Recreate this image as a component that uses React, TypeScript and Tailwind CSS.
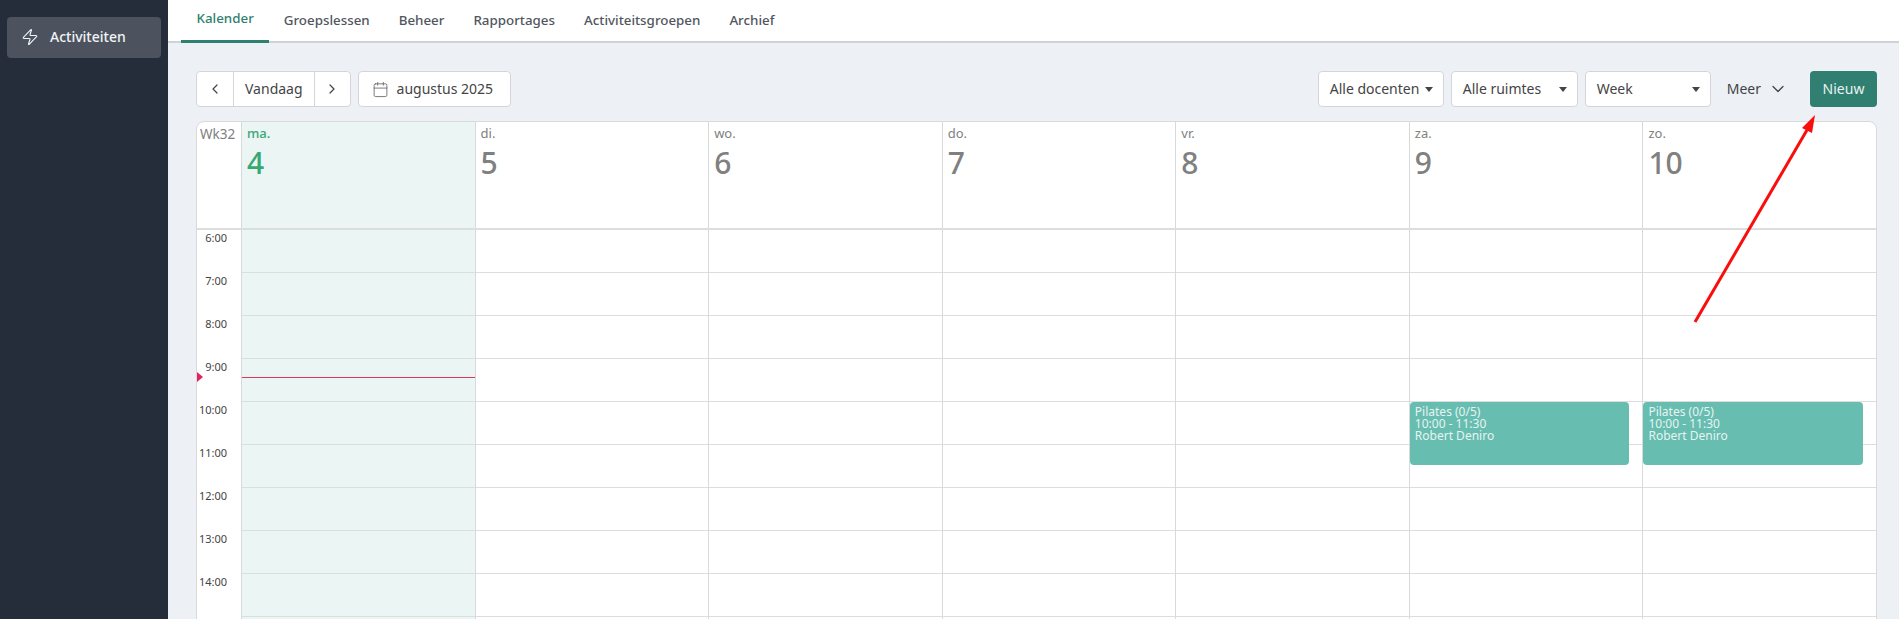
import { Calendar, ChevronDown, ChevronLeft, ChevronRight, Zap } from "lucide-react";

const tabs = ["Kalender", "Groepslessen", "Beheer", "Rapportages", "Activiteitsgroepen", "Archief"];
const days = [
  { name: "ma.", num: "4", today: true },
  { name: "di.", num: "5" },
  { name: "wo.", num: "6" },
  { name: "do.", num: "7" },
  { name: "vr.", num: "8" },
  { name: "za.", num: "9", event: true },
  { name: "zo.", num: "10", event: true },
];
// last row only peeks in at the bottom, its label falls below the fold
const hours = ["6:00", "7:00", "8:00", "9:00", "10:00", "11:00", "12:00", "13:00", "14:00", ""];

const Caret = () => <span className="h-0 w-0 border-x-[4px] border-t-[5px] border-x-transparent border-t-[#444]" />;

const Select = ({ label, width }: { label: string; width: string }) => (
  <div className={"flex h-[36px] items-center justify-between rounded border border-[#d2d5da] bg-white pl-[11px] pr-[10px] text-sm text-[#444] " + width}>
    {label}
    <Caret />
  </div>
);

const App = () => {
  return (
    <div className="flex h-screen w-full overflow-hidden bg-[#edf0f5] font-['Noto_Sans',sans-serif]">
      <aside className="w-[168px] shrink-0 bg-[#252d3a] px-[7px] pt-[17px]">
        <div className="flex h-[41px] items-center gap-[11px] rounded bg-[#4c535f] pb-px pl-[14px] text-sm font-medium text-[#f1f3f5]">
          <Zap size={18} strokeWidth={1.5} />
          Activiteiten
        </div>
      </aside>

      <main className="relative min-w-0 flex-1">
        <nav className="flex h-[43px] gap-0 border-b-2 border-[#cfd3d8] bg-white pl-[13px]">
          {tabs.map((t, i) => (
            <div
              key={t}
              className={
                "-mb-[2px] flex h-[43px] items-center pb-[3px] text-[13.35px] font-medium " +
                (i === 0 ? "border-b-[3px] border-[#2f8070] px-[15.5px] text-[#2f8070]" : "px-[14.5px] text-[#51565e]")
              }
            >
              {t}
            </div>
          ))}
        </nav>

        <div className="flex items-center pl-[28px] pr-[22px] pt-[28px]">
          <div className="flex h-[36px] items-center rounded border border-[#d2d5da] bg-white text-sm text-[#444]">
            <div className="flex h-full w-[37px] items-center justify-center border-r border-[#d2d5da]">
              <ChevronLeft size={16} strokeWidth={1.8} />
            </div>
            <div className="px-[11px]">Vandaag</div>
            <div className="flex h-full w-[36px] items-center justify-center border-l border-[#d2d5da]">
              <ChevronRight size={16} strokeWidth={1.8} />
            </div>
          </div>
          <div className="ml-[7px] flex h-[36px] items-center gap-[8px] rounded border border-[#d2d5da] bg-white pl-[13px] pr-[17px] text-sm text-[#444]">
            <Calendar size={17} strokeWidth={1.2} className="text-[#666]" />
            augustus 2025
          </div>
          <div className="ml-auto flex items-center gap-[7px]">
            <Select label="Alle docenten" width="w-[126px]" />
            <Select label="Alle ruimtes" width="w-[127px]" />
            <Select label="Week" width="w-[126px]" />
            <div className="flex items-center gap-[7px] pl-[9px] pr-[15px] text-sm text-[#444]">
              Meer
              <ChevronDown size={20} strokeWidth={1.5} />
            </div>
            <div className="flex h-[36px] w-[67px] items-center justify-center rounded-sm bg-[#317f70] text-sm text-[#e8f3f0]">
              Nieuw
            </div>
          </div>
        </div>

        <div className="ml-[28px] mr-[22px] mt-[14px] overflow-hidden rounded-t-lg border border-[#d8d9db] bg-white">
          <div className="grid h-[108px] grid-cols-[44px_repeat(7,1fr)] border-b-2 border-[#dcdddf]">
            <div className="pl-[3px] pt-[2px] text-[13.5px] text-[#808080]">Wk32</div>
            {days.map((d) => (
              <div
                key={d.name}
                className={"border-l border-[#d8d9db] pl-[5px] pt-[1px] " + (d.today ? "bg-[#ebf5f3] text-[#38a873]" : "text-[#808080]")}
              >
                <div className={"text-[13px] leading-5 " + (d.today ? "font-medium" : "")}>{d.name}</div>
                <div className="text-[30px] font-medium leading-10">{d.num}</div>
              </div>
            ))}
          </div>

          <div className="grid grid-cols-[44px_repeat(7,1fr)]">
            <div className="relative">
              {hours.map((h) => (
                <div key={h} className="h-[43px] pr-[14px] text-right text-[11px] leading-[16px] text-[#444]">
                  {h}
                </div>
              ))}
              <span className="absolute left-0 top-[142px] h-0 w-0 border-y-[5px] border-l-[6px] border-y-transparent border-l-[#e0245e]" />
            </div>
            {days.map((d) => (
              <div key={d.name} className={"relative border-l border-[#d8d9db] " + (d.today ? "bg-[#ebf5f3]" : "")}>
                {hours.map((h) => (
                  <div key={h} className="h-[43px] border-b border-[#dcdddf]" />
                ))}
                {d.today && <div className="absolute inset-x-0 top-[147px] h-px bg-[#d9385f]" />}
                {d.event && (
                  <div className="absolute left-0 right-[13px] top-[172px] h-[63px] rounded bg-[#67bdb0] px-[5px] pt-[4px] text-xs leading-[12px] text-[#e6f4f1]">
                    <div>Pilates (0/5)</div>
                    <div>10:00 - 11:30</div>
                    <div>Robert Deniro</div>
                  </div>
                )}
              </div>
            ))}
          </div>
        </div>

        <svg className="pointer-events-none absolute left-[1500px] top-[100px]" width="160" height="240" viewBox="0 0 160 240" fill="none">
          <line x1="27" y1="222" x2="139" y2="30" stroke="#f90d0d" strokeWidth="3" />
          <polygon points="147,15 144,33 134,28" fill="#f90d0d" />
        </svg>
      </main>
    </div>
  );
};

export default App;
